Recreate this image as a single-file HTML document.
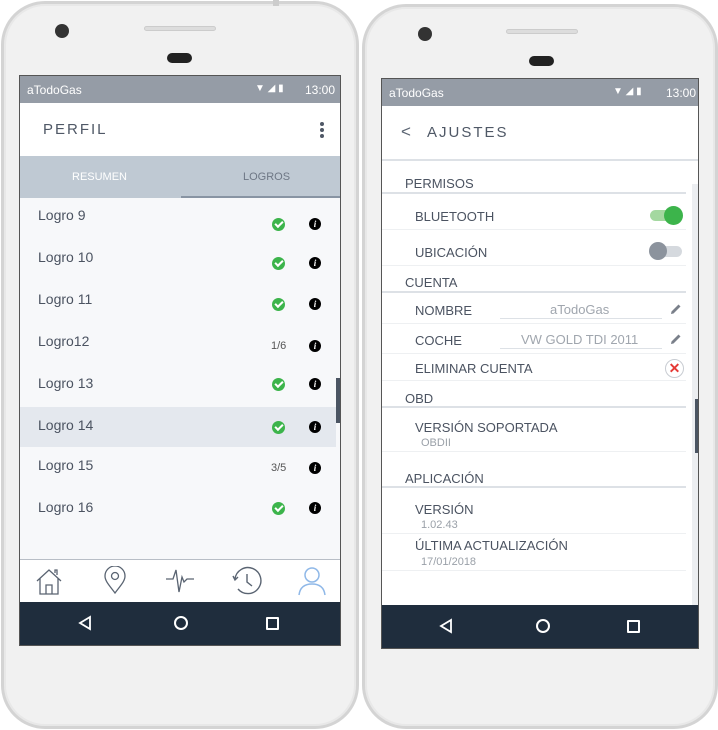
<!DOCTYPE html>
<html><head><meta charset="utf-8"><style>
*{margin:0;padding:0;box-sizing:border-box}
body{width:718px;height:730px;background:#fff;position:relative;overflow:hidden;font-family:"Liberation Sans",sans-serif;color:#4a5260}
.a{position:absolute}
.phone{position:absolute;background:#f1f1f1;border:3px solid #d4d4d4;border-radius:44px;box-shadow:inset 0 0 0 2px #e8e8e8}
.scr{position:absolute;overflow:hidden;border:1px solid #555}
.sb{position:absolute;left:0;right:0;top:0;height:27px;background:#959ca6;color:#fff;font-size:12px}
.nav{position:absolute;left:0;right:0;bottom:0;height:43px;background:#1f2d3d}
.row{position:absolute;left:0;width:316px;height:42px;font-size:14px;color:#4b5361}
.chk{position:absolute;left:252px;width:13px;height:13px;border-radius:50%;background:#3cb44b}
.chk:after{content:"";position:absolute;left:3px;top:3px;width:6px;height:3px;border-left:2px solid #fff;border-bottom:2px solid #fff;transform:rotate(-45deg)}
.inf{position:absolute;left:289px;width:12px;height:12px;border-radius:50%;background:#000;color:#fff;font:bold 9px/12px "Liberation Serif",serif;text-align:center;font-style:italic}
.frac{position:absolute;left:251px;font-size:11px;color:#555}
.lbl{position:absolute;font-size:13px;color:#4b5361}
.sub{position:absolute;font-size:11px;color:#9aa0a8}
.hl{position:absolute;left:0;right:12px;height:2px;background:#dde1e6}
.tl{position:absolute;left:0;right:12px;height:1px;background:#eef0f2}
</style></head><body>

<!-- LEFT PHONE -->
<div class="phone" style="left:1px;top:1px;width:358px;height:728px"></div>
<div class="a" style="left:273px;top:0;width:6px;height:6px;background:#ccc"></div>
<div class="a" style="left:55px;top:24px;width:14px;height:14px;border-radius:50%;background:#333"></div>
<div class="a" style="left:144px;top:26px;width:72px;height:5px;border-radius:3px;background:#ddd;border:1px solid #ccc"></div>
<div class="a" style="left:167px;top:53px;width:25px;height:10px;border-radius:5px;background:#222"></div>

<div class="scr" style="left:19px;top:75px;width:322px;height:571px;background:#f7f8fa">
  <div class="sb"><span class="a" style="left:7px;top:7px">aTodoGas</span>
    <span class="a" style="left:235px;top:7px;font-size:10px">▼ ◢ ▮</span>
    <span class="a" style="left:285px;top:7px">13:00</span></div>
  <div class="a" style="left:0;top:27px;width:322px;height:53px;background:#fff">
    <span class="a" style="left:23px;top:18px;font-size:15px;letter-spacing:2px;color:#4f5866">PERFIL</span>
    <span class="a" style="left:300px;top:19px;width:4px;height:4px;border-radius:50%;background:#4f5866;box-shadow:0 6px 0 #4f5866,0 12px 0 #4f5866"></span>
  </div>
  <div class="a" style="left:0;top:80px;width:322px;height:42px;background:#bfc9d3">
    <span class="a" style="left:52px;top:15px;font-size:11px;color:#fff">RESUMEN</span>
    <span class="a" style="left:223px;top:15px;font-size:11px;color:#6e7785">LOGROS</span>
    <div class="a" style="left:161px;top:40px;width:161px;height:2px;background:#8894a3"></div>
  </div>
  <div class="row" style="top:121px"><span class="a" style="left:18px;top:10px">Logro 9</span><i class="chk" style="top:21px"></i><i class="inf" style="top:21px">i</i></div>
  <div class="row" style="top:163px"><span class="a" style="left:18px;top:10px">Logro 10</span><i class="chk" style="top:18px"></i><i class="inf" style="top:18px">i</i></div>
  <div class="row" style="top:205px"><span class="a" style="left:18px;top:10px">Logro 11</span><i class="chk" style="top:17px"></i><i class="inf" style="top:17px">i</i></div>
  <div class="row" style="top:247px"><span class="a" style="left:18px;top:10px">Logro12</span><span class="frac" style="top:17px">1/6</span><i class="inf" style="top:17px">i</i></div>
  <div class="row" style="top:289px"><span class="a" style="left:18px;top:10px">Logro 13</span><i class="chk" style="top:13px"></i><i class="inf" style="top:13px">i</i></div>
  <div class="row" style="top:331px;height:40px;background:#e4e8ee"><span class="a" style="left:18px;top:10px">Logro 14</span><i class="chk" style="top:14px"></i><i class="inf" style="top:14px">i</i></div>
  <div class="row" style="top:371px"><span class="a" style="left:18px;top:10px">Logro 15</span><span class="frac" style="top:15px">3/5</span><i class="inf" style="top:15px">i</i></div>
  <div class="row" style="top:413px"><span class="a" style="left:18px;top:10px">Logro 16</span><i class="chk" style="top:13px"></i><i class="inf" style="top:13px">i</i></div>
  <div class="a" style="left:316px;top:302px;width:5px;height:45px;background:#4b5563"></div>
  <div class="a" style="left:0;top:483px;width:322px;height:44px;background:#fff;border-top:1px solid #b8bec6">
    <svg class="a" style="left:14px;top:7px" width="30" height="30" viewBox="0 0 30 30" fill="none" stroke="#5a6472" stroke-width="1.3"><path d="M3 14 L15 3 L27 14 M6 11 V27 H24 V11 M12 27 V18 H18 V27 M21 6 V3 H23 V8"/></svg>
    <svg class="a" style="left:83px;top:6px" width="24" height="30" viewBox="0 0 24 30" fill="none" stroke="#5a6472" stroke-width="1.3"><path d="M12 27 C6 19 2 15 2 10 A10 10 0 0 1 22 10 C22 15 18 19 12 27Z"/><circle cx="12" cy="10" r="3.5"/></svg>
    <svg class="a" style="left:144px;top:6px" width="32" height="30" viewBox="0 0 32 30" fill="none" stroke="#5a6472" stroke-width="1.3"><path d="M2 13 H9 L12 4 L15 26 L18 11 L20 16 L23 13 H30"/></svg>
    <svg class="a" style="left:210px;top:5px" width="32" height="32" viewBox="0 0 32 32" fill="none" stroke="#5a6472" stroke-width="1.4"><path d="M5 14 A13 13 0 1 1 8 24"/><path d="M3 11 L5 15 L8 12"/><path d="M17 9 V17 L22 21"/></svg>
    <svg class="a" style="left:277px;top:5px" width="30" height="32" viewBox="0 0 30 32" fill="none" stroke="#8fb8e8" stroke-width="1.5"><circle cx="15" cy="10" r="7"/><path d="M2 30 C3 22 8 19 15 19 C22 19 27 22 28 30"/></svg>
  </div>
  <div class="nav">
    <svg class="a" style="left:57px;top:13px" width="16" height="16" viewBox="0 0 16 16" fill="none" stroke="#fff" stroke-width="1.8"><path d="M13 2 L3 8 L13 14Z"/></svg>
    <div class="a" style="left:154px;top:14px;width:14px;height:14px;border:2px solid #fff;border-radius:50%"></div>
    <div class="a" style="left:246px;top:15px;width:13px;height:13px;border:2px solid #fff;border-radius:1px"></div>
  </div>
</div>

<!-- RIGHT PHONE -->
<div class="phone" style="left:362px;top:4px;width:356px;height:725px"></div>
<div class="a" style="left:418px;top:27px;width:14px;height:14px;border-radius:50%;background:#333"></div>
<div class="a" style="left:506px;top:29px;width:72px;height:5px;border-radius:3px;background:#ddd;border:1px solid #ccc"></div>
<div class="a" style="left:529px;top:56px;width:25px;height:10px;border-radius:5px;background:#222"></div>

<div class="scr" style="left:381px;top:78px;width:318px;height:571px;background:#fff">
  <div class="sb"><span class="a" style="left:7px;top:7px">aTodoGas</span>
    <span class="a" style="left:231px;top:7px;font-size:10px">▼ ◢ ▮</span>
    <span class="a" style="left:284px;top:7px">13:00</span></div>
  <div class="a" style="left:0;top:27px;width:318px;height:55px;background:#fff;border-bottom:2px solid #dde1e6">
    <span class="a" style="left:19px;top:16px;font-size:17px;color:#5a6472">&lt;</span>
    <span class="a" style="left:45px;top:18px;font-size:15px;letter-spacing:2px;color:#4f5866">AJUSTES</span>
  </div>
  <div class="a" style="left:310px;top:105px;width:8px;height:466px;background:#eceef1"></div>
  <div class="a" style="left:313px;top:320px;width:5px;height:54px;background:#4b5563"></div>
  <span class="lbl" style="left:23px;top:97px">PERMISOS</span>
  <div class="hl" style="top:113px"></div>
  <span class="lbl" style="left:33px;top:130px">BLUETOOTH</span>
  <div class="a" style="left:268px;top:131px;width:32px;height:11px;border-radius:6px;background:#a4d8a0"></div>
  <div class="a" style="left:282px;top:127px;width:19px;height:19px;border-radius:50%;background:#3cb44b"></div>
  <div class="tl" style="top:150px"></div>
  <span class="lbl" style="left:33px;top:166px">UBICACIÓN</span>
  <div class="a" style="left:268px;top:167px;width:32px;height:11px;border-radius:6px;background:#d5d9de"></div>
  <div class="a" style="left:267px;top:163px;width:18px;height:18px;border-radius:50%;background:#8c939d"></div>
  <div class="tl" style="top:186px"></div>
  <span class="lbl" style="left:23px;top:196px">CUENTA</span>
  <div class="hl" style="top:212px"></div>
  <span class="lbl" style="left:33px;top:224px">NOMBRE</span>
  <span class="a" style="left:168px;top:223px;font-size:13px;color:#a0a6ae">aTodoGas</span>
  <div class="a" style="left:118px;top:239px;width:162px;height:1px;background:#dde1e6"></div>
  <svg class="a" style="left:288px;top:224px" width="12" height="12" viewBox="0 0 12 12"><path d="M1 11 L1.5 8.5 L8.5 1.5 L10.5 3.5 L3.5 10.5Z" fill="#7a808a"/></svg>
  <div class="tl" style="top:244px"></div>
  <span class="lbl" style="left:33px;top:254px">COCHE</span>
  <span class="a" style="left:139px;top:253px;font-size:13px;color:#a0a6ae">VW GOLD TDI 2011</span>
  <div class="a" style="left:118px;top:269px;width:162px;height:1px;background:#dde1e6"></div>
  <svg class="a" style="left:288px;top:254px" width="12" height="12" viewBox="0 0 12 12"><path d="M1 11 L1.5 8.5 L8.5 1.5 L10.5 3.5 L3.5 10.5Z" fill="#7a808a"/></svg>
  <div class="tl" style="top:274px"></div>
  <span class="lbl" style="left:33px;top:282px">ELIMINAR CUENTA</span>
  <div class="a" style="left:283px;top:280px;width:19px;height:19px;border-radius:50%;border:1px solid #c8ccd2;color:#e53935;font:bold 14px/17px sans-serif;text-align:center">✕</div>
  <div class="tl" style="top:301px"></div>
  <span class="lbl" style="left:23px;top:312px">OBD</span>
  <div class="hl" style="top:327px"></div>
  <span class="lbl" style="left:33px;top:341px">VERSIÓN SOPORTADA</span>
  <span class="sub" style="left:39px;top:358px">OBDII</span>
  <div class="tl" style="top:372px"></div>
  <span class="lbl" style="left:23px;top:392px">APLICACIÓN</span>
  <div class="hl" style="top:407px"></div>
  <span class="lbl" style="left:33px;top:423px">VERSIÓN</span>
  <span class="sub" style="left:39px;top:440px">1.02.43</span>
  <div class="tl" style="top:454px"></div>
  <span class="lbl" style="left:33px;top:459px">ÚLTIMA ACTUALIZACIÓN</span>
  <span class="sub" style="left:39px;top:477px">17/01/2018</span>
  <div class="tl" style="top:491px"></div>
  <div class="nav">
    <svg class="a" style="left:56px;top:13px" width="16" height="16" viewBox="0 0 16 16" fill="none" stroke="#fff" stroke-width="1.8"><path d="M13 2 L3 8 L13 14Z"/></svg>
    <div class="a" style="left:154px;top:14px;width:14px;height:14px;border:2px solid #fff;border-radius:50%"></div>
    <div class="a" style="left:245px;top:15px;width:13px;height:13px;border:2px solid #fff;border-radius:1px"></div>
  </div>
</div>
</body></html>
